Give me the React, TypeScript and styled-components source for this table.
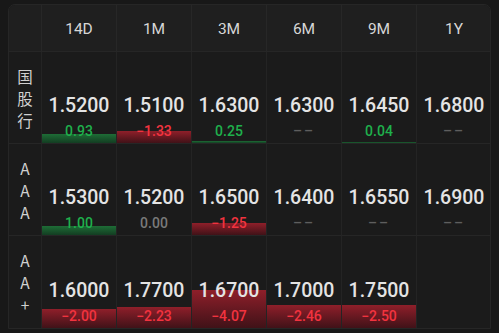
import React from "react";
import styled, { createGlobalStyle } from "styled-components";

const Global = createGlobalStyle`
  html, body { margin: 0; padding: 0; background: #181818; }
  body { font-family: Roboto, "Noto Sans", "Noto Sans CJK SC", sans-serif; }
`;

const Page = styled.div`
  padding: 4px 8px 0 8px;
  width: 499px;
  height: 333px;
  box-sizing: border-box;
  overflow: hidden;
`;

const Card = styled.div`
  display: grid;
  grid-template-columns: 32px repeat(6, 75px);
  grid-template-rows: 47px repeat(3, 92px);
  background: #1b1b1b;
  border: 1px solid #262626;
  border-radius: 7px 7px 0 0;
  overflow: hidden;
  width: 483px;
  box-sizing: border-box;
`;

const HeadCell = styled.div<{ $first?: boolean }>`
  background: #1f1f1f;
  display: flex;
  align-items: center;
  justify-content: center;
  color: #d6d6d6;
  font-size: 15.5px;
  padding-top: 2px;
  border-left: ${(p) => (p.$first ? "none" : "1px solid #272727")};
  border-bottom: 1px solid #262626;
`;

const RowLabel = styled.div<{ $last?: boolean }>`
  display: flex;
  flex-direction: column;
  align-items: center;
  justify-content: center;
  color: #d0d0d0;
  font-family: "Noto Sans CJK SC", "Noto Sans", sans-serif;
  font-size: 15.5px;
  line-height: 22px;
  border-bottom: ${(p) => (p.$last ? "none" : "1px solid #262626")};
`;

const Cell = styled.div<{ $last?: boolean }>`
  position: relative;
  display: flex;
  flex-direction: column;
  align-items: center;
  justify-content: flex-end;
  padding-bottom: 3px;
  border-left: 1px solid #242424;
  border-bottom: ${(p) => (p.$last ? "none" : "1px solid #262626")};
`;

const Bar = styled.div<{ $up: boolean }>`
  position: absolute;
  left: 0;
  right: 0;
  bottom: 0;
  background: ${(p) =>
    p.$up
      ? "linear-gradient(180deg, #1e6d36 0%, #133d22 100%)"
      : "linear-gradient(180deg, #8f1f2a 0%, #401218 100%)"};
`;

const Price = styled.div`
  position: relative;
  color: #e4e4e4;
  font-size: 19.5px;
  font-weight: 500;
  line-height: 22px;
  margin-bottom: 5px;
`;

const Change = styled.div<{ $tone: "up" | "down" | "flat" | "none" }>`
  position: relative;
  font-size: 14px;
  font-weight: 500;
  line-height: 18px;
  letter-spacing: ${(p) => (p.$tone === "none" ? "2px" : "0")};
  color: ${(p) =>
    p.$tone === "up"
      ? "#1fb04c"
      : p.$tone === "down"
      ? "#f2333f"
      : p.$tone === "flat"
      ? "#7a7a7a"
      : "#5e5e5e"};
`;

type Item = { price: string; change: number | null } | null;

const headers = ["14D", "1M", "3M", "6M", "9M", "1Y"];

const rows: { label: string[]; items: Item[] }[] = [
  {
    label: ["国", "股", "行"],
    items: [
      { price: "1.5200", change: 0.93 },
      { price: "1.5100", change: -1.33 },
      { price: "1.6300", change: 0.25 },
      { price: "1.6300", change: null },
      { price: "1.6450", change: 0.04 },
      { price: "1.6800", change: null },
    ],
  },
  {
    label: ["A", "A", "A"],
    items: [
      { price: "1.5300", change: 1.0 },
      { price: "1.5200", change: 0 },
      { price: "1.6500", change: -1.25 },
      { price: "1.6400", change: null },
      { price: "1.6550", change: null },
      { price: "1.6900", change: null },
    ],
  },
  {
    label: ["A", "A", "+"],
    items: [
      { price: "1.6000", change: -2.0 },
      { price: "1.7700", change: -2.23 },
      { price: "1.6700", change: -4.07 },
      { price: "1.7000", change: -2.46 },
      { price: "1.7500", change: -2.5 },
      null,
    ],
  },
];

const fmt = (v: number) => (v < 0 ? "\u2212" + Math.abs(v).toFixed(2) : v.toFixed(2));

export default function App() {
  return (
    <Page>
      <Global />
      <Card>
        <HeadCell $first />
        {headers.map((h) => (
          <HeadCell key={h}>{h}</HeadCell>
        ))}
        {rows.map((row, ri) => {
          const last = ri === rows.length - 1;
          return (
            <React.Fragment key={ri}>
              <RowLabel $last={last}>
                {row.label.map((c, i) => (
                  <span key={i}>{c}</span>
                ))}
              </RowLabel>
              {row.items.map((it, ci) => {
                if (!it) return <Cell key={ci} $last={last} />;
                const c = it.change;
                const tone = c === null ? "none" : c > 0 ? "up" : c < 0 ? "down" : "flat";
                const h = c ? Math.max(1, Math.abs(c) * 9.3) : 0;
                return (
                  <Cell key={ci} $last={last}>
                    {h > 0 && <Bar $up={(c as number) > 0} style={{ height: h }} />}
                    <Price>{it.price}</Price>
                    <Change $tone={tone}>{c === null ? "\u2013\u2013" : fmt(c)}</Change>
                  </Cell>
                );
              })}
            </React.Fragment>
          );
        })}
      </Card>
    </Page>
  );
}
